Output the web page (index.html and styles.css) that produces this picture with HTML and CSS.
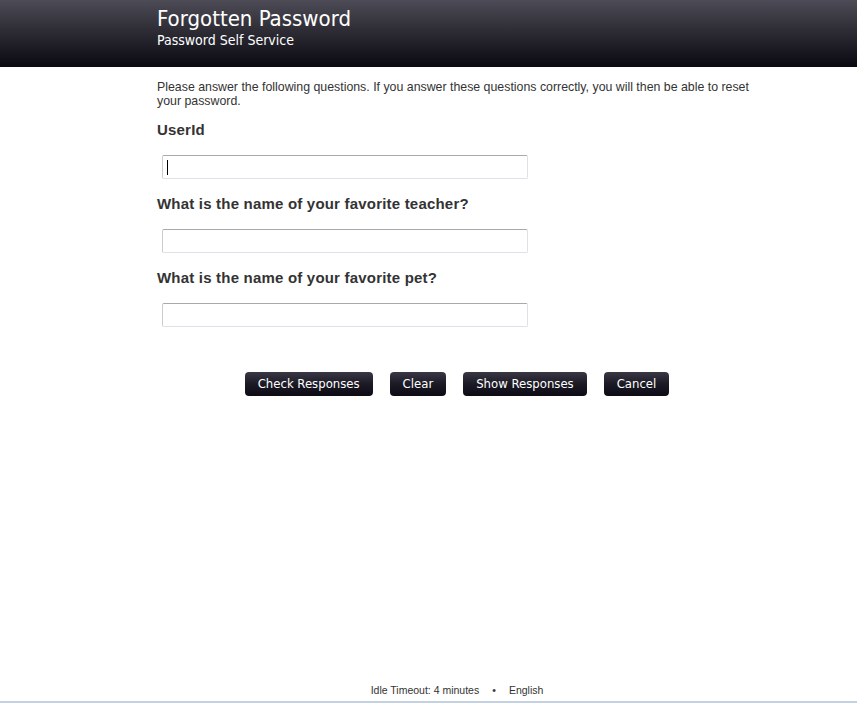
FILE: index.html
```html
<!DOCTYPE html>
<html>
<head>
<meta charset="utf-8">
<link rel="stylesheet" href="styles.css">
</head>
<body>
<header class="header">
  <div class="column header-inner">
    <div class="title">Forgotten Password</div>
    <div class="subtitle">Password Self Service</div>
  </div>
</header>
<main class="column content">
  <p class="intro">Please answer the following questions. If you answer these questions correctly, you will then be able to reset your password.</p>
  <form class="form">
    <div class="field">
      <label class="label">UserId</label>
      <div class="input"><span class="caret"></span></div>
    </div>
    <div class="field">
      <label class="label">What is the name of your favorite teacher?</label>
      <div class="input"></div>
    </div>
    <div class="field">
      <label class="label">What is the name of your favorite pet?</label>
      <div class="input"></div>
    </div>
    <div class="buttons">
      <button type="button" class="btn">Check Responses</button>
      <button type="button" class="btn">Clear</button>
      <button type="button" class="btn">Show Responses</button>
      <button type="button" class="btn">Cancel</button>
    </div>
  </form>
</main>
<footer class="footer">
  <div class="column footer-inner">
    <span>Idle Timeout: 4 minutes</span>
    <span class="dot">&bull;</span>
    <span>English</span>
  </div>
</footer>
</body>
</html>
```
FILE: styles.css
```css
html, body {
  margin: 0;
  padding: 0;
  height: 100%;
}
body {
  font-family: "Liberation Sans", Arial, sans-serif;
  color: #333;
  background: #fff;
  display: flex;
  flex-direction: column;
}
.column {
  width: 600px;
  margin-left: calc(50% - 271.5px);
}
.header {
  height: 67px;
  background: linear-gradient(to bottom, #4d4c56 0%, #2e2d36 45%, #0a0811 100%);
  color: #fff;
  flex: none;
}
.header-inner {
  padding-top: 6px;
  font-family: "DejaVu Sans Condensed", "DejaVu Sans", sans-serif;
  font-stretch: condensed;
}
.title {
  font-size: 22px;
  line-height: 26px;
}
.subtitle {
  font-size: 14px;
  line-height: 16px;
}
.content {
  flex: 1;
}
.intro {
  font-size: 12.35px;
  line-height: 14px;
  margin: 13px 0 0;
  color: #333;
}
.field {
  margin-top: 14px;
}
.field + .field {
  margin-top: 17px;
}
.label {
  display: block;
  font-size: 15px;
  font-weight: bold;
  letter-spacing: 0.2px;
  line-height: 16px;
  color: #333;
}
.input {
  margin: 17px 0 0 5px;
  width: 364px;
  height: 22px;
  border: 1px solid #dde2e8;
  border-top-color: #a9a9a9;
  border-left-color: #ccc;
  border-radius: 2px;
  display: flex;
  align-items: center;
}
.caret {
  width: 1px;
  height: 15px;
  background: #000;
  margin-left: 4px;
}
.buttons {
  display: flex;
  justify-content: center;
  gap: 17px;
  margin-top: 45px;
}
.btn {
  height: 24px;
  padding: 0 13px;
  border: none;
  border-radius: 4px;
  background: linear-gradient(to bottom, #3a3844 0%, #1c1a25 50%, #0c0a14 100%);
  color: #fff;
  font-family: "DejaVu Sans Condensed", "DejaVu Sans", sans-serif;
  font-stretch: condensed;
  font-size: 13px;
  line-height: 24px;
}
.footer {
  flex: none;
  height: 22px;
  border-bottom: 2px solid #c3d2e3;
}
.footer-inner {
  display: flex;
  justify-content: center;
  gap: 13px;
  font-size: 10.5px;
  line-height: 22px;
  color: #333;
}
```
